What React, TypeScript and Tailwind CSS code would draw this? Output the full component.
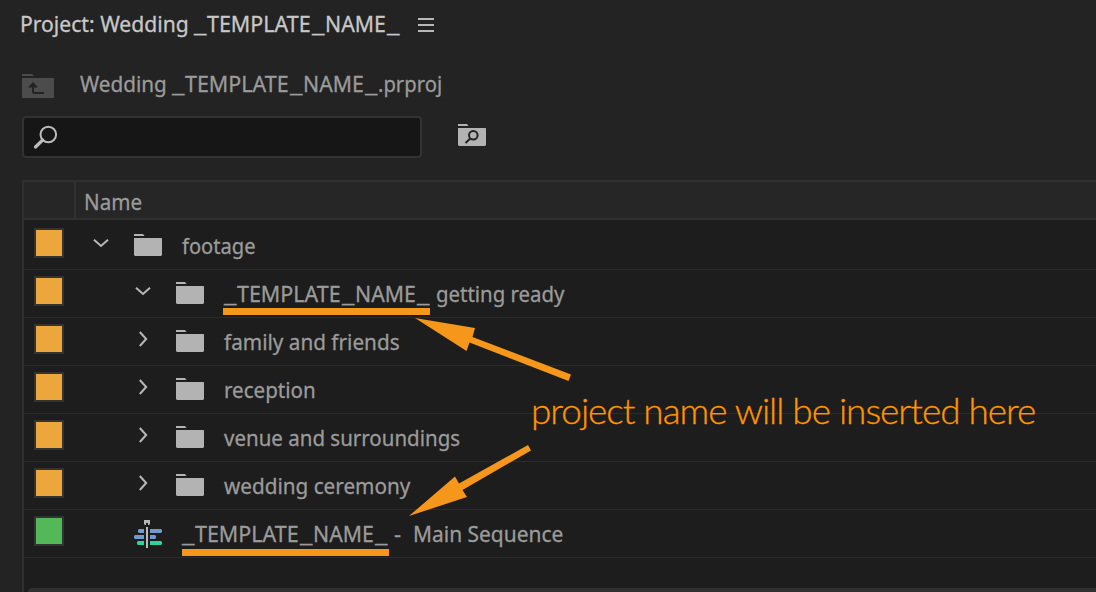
import type { ReactNode } from "react";

function Folder({ children }: { children?: ReactNode }) {
  return (
    <svg width="28" height="22" viewBox="0 0 28 22" className="shrink-0 fill-[#b3b3b3]">
      <path d="M0 0h9l1.5 2H0zM0 4h27.5l.5.5V21l-1 1H1l-1-1z" />
      {children}
    </svg>
  );
}

function Chevron({ open }: { open?: boolean }) {
  return (
    <svg width="16" height="16" viewBox="0 0 16 16" className="shrink-0 fill-none stroke-[#b8b8b8] stroke-2">
      <path d={open ? "M1 4.8L8 11L15 4.8" : "M4.8 1L11.2 8L4.8 15"} />
    </svg>
  );
}

function SequenceIcon() {
  return (
    <svg width="28" height="28" viewBox="0 0 28 28" className="shrink-0">
      <path fill="#7099cf" d="M5 9h5v4H5l-1-1v-2zM16 9h11l1 1v2l-1 1H16zM1 15h9v4H1l-1-1v-2zM16 15h5l1 1v2l-1 1h-5z" />
      <path fill="#2bd49b" d="M4 21h6v4H4l-1-1v-2zM16 21h11l1 1v2l-1 1H16z" />
      <path fill="#b8b8b8" d="M10 0h6v4l-1 1h-1V3h-2v2h-1l-1-1zM12 7h2v21h-2z" />
    </svg>
  );
}

function TemplateName() {
  return (
    <span className="flex w-[206px] shrink-0">
      <span className="w-[13px] origin-left scale-x-[1.27]">_</span>
      <span className="w-[105px] origin-left scale-x-[.975]">TEMPLATE</span>
      <span className="w-[13px] origin-left scale-x-[1.27]">_</span>
      <span className="w-[62px] origin-left scale-x-[.965]">NAME</span>
      <span className="w-[13px] origin-left scale-x-[1.27]">_</span>
    </span>
  );
}

interface Item {
  text: ReactNode;
  nested?: boolean;
  open?: boolean;
  sequence?: boolean;
}

const items: Item[] = [
  { open: true, text: <span className="origin-left scale-x-[.915]">footage</span> },
  {
    nested: true,
    open: true,
    text: (
      <>
        <TemplateName />
        <span className="ml-1.5 origin-left scale-x-[.927]">getting ready</span>
      </>
    ),
  },
  { nested: true, text: <span className="origin-left scale-x-[.942]">family and friends</span> },
  { nested: true, text: <span className="origin-left scale-x-[.935]">reception</span> },
  { nested: true, text: <span className="origin-left scale-x-[.932]">venue and surroundings</span> },
  { nested: true, text: <span className="origin-left scale-x-[.941]">wedding ceremony</span> },
  {
    sequence: true,
    text: (
      <>
        <TemplateName />
        <span className="ml-1.5 w-[19px]">-</span>
        <span className="origin-left scale-x-[.952]">Main Sequence</span>
      </>
    ),
  },
];

function Row({ item }: { item: Item }) {
  return (
    <div className="flex h-12 shrink-0 border-b border-[#2b2b2b]">
      <div className="ml-2.5 mt-1.5 size-[30px] shrink-0 border-2 border-[#333333]">
        <div className={item.sequence ? "size-full bg-[#52b858]" : "size-full bg-[#eda63c]"} />
      </div>
      <div className={item.nested ? "ml-[71px] mt-[13px] w-[41px]" : "ml-[29px] mt-[13px] w-[41px]"}>
        {!item.sequence && <Chevron open={item.open} />}
      </div>
      <div className={item.sequence ? "mt-[10px] w-12" : "mt-3 w-12"}>
        {item.sequence ? <SequenceIcon /> : <Folder />}
      </div>
      <div className="mt-2 flex h-[30px] whitespace-nowrap text-[#9b9b9b]">{item.text}</div>
    </div>
  );
}

export default function App() {
  return (
    <div className="relative flex h-[592px] w-[1096px] flex-col overflow-hidden bg-[#232323] font-['Noto_Sans',sans-serif] text-[22px] leading-[30px] [-webkit-text-stroke:0.3px]">
      <header className="flex h-12 shrink-0 pl-5 pt-2">
        <h1 className="flex w-[398px] whitespace-nowrap text-[#c8c8c8]">
          <span className="w-[174px] origin-left scale-x-[.96]">Project: Wedding</span>
          <TemplateName />
        </h1>
        <div className="mt-[10px] flex w-4 flex-col gap-1">
          <i className="h-0.5 bg-[#b8b8b8]" />
          <i className="h-0.5 bg-[#b8b8b8]" />
          <i className="h-0.5 bg-[#b8b8b8]" />
        </div>
      </header>

      <div className="flex h-[68px] shrink-0 pl-[22px] pt-5">
        <svg width="32" height="24" viewBox="0 0 32 24" className="mt-1.5 shrink-0">
          <path fill="#4c4c4c" d="M0 0h10l2 2H0zM0 4h32v20H0z" />
          <path fill="#232323" d="M11 8l5 5.5h-4V18h10v2H11.500L10 18.500v-5H6z" />
        </svg>
        <div className="ml-[26px] flex whitespace-nowrap text-[#9b9b9b]">
          <span className="w-[92px] origin-left scale-x-[.94]">Wedding</span>
          <TemplateName />
          <span className="origin-left scale-x-[.92]">.prproj</span>
        </div>
      </div>

      <div className="flex h-16 shrink-0 pl-[22px]">
        <div className="h-[42px] w-[400px] rounded border-2 border-[#323232] bg-[#161616] pl-[9px] pt-[7px]">
          <svg width="26" height="26" viewBox="0 0 26 26" className="fill-none stroke-[#bcbcbc]">
            <circle cx="15.300" cy="9.500" r="7.800" strokeWidth="2" />
            <path d="M9.700 15L2.500 22" strokeWidth="3.200" strokeLinecap="round" />
          </svg>
        </div>
        <div className="ml-9 mt-2">
          <Folder>
            <circle cx="15.300" cy="11.300" r="4.300" className="fill-none stroke-[#232323] stroke-2" />
            <path d="M12.200 14.500L7.500 19" className="stroke-[#232323] stroke-2" />
          </Folder>
        </div>
      </div>

      <main className="ml-[22px] flex h-[412px] shrink-0 flex-col border-l-2 border-t-2 border-[#303030] bg-[#1d1d1d]">
        <div className="flex h-[38px] shrink-0 border-b-2 border-[#303030] bg-[#262626] text-[#9b9b9b]">
          <div className="w-[52px] border-r-2 border-[#303030]" />
          <span className="ml-2 mt-1 h-[30px] origin-left scale-x-[.935]">Name</span>
        </div>
        <div className="flex flex-col pt-0.5">
          {items.map((item, i) => (
            <Row key={i} item={item} />
          ))}
        </div>
        <div className="ml-1 mt-[30px] h-1 shrink-0 rounded-tl bg-[#303030]" />
      </main>

      <div className="absolute left-[223px] top-[308px] h-[7px] w-[207px] bg-[#f4971b]" />
      <div className="absolute left-[182px] top-[549px] h-[7px] w-[207px] bg-[#f4971b]" />
      <svg width="1096" height="592" className="absolute inset-0 fill-[#f4971b]">
        <path d="M415 318L475 328L472.500 337L571 374.500L568.500 381L469.500 342.500L466.500 351Z" />
        <path d="M409 516L455 476.500L459 483.500L528 445L531 450.500L462.500 490L467 497Z" />
      </svg>
      <p className="absolute left-[531px] top-[388px] origin-left scale-x-[1.026] whitespace-nowrap font-['Lato',sans-serif] text-[36px] font-light leading-[44px] tracking-[-1px] text-[#ff9500]">
        project name will be inserted here
      </p>
    </div>
  );
}
